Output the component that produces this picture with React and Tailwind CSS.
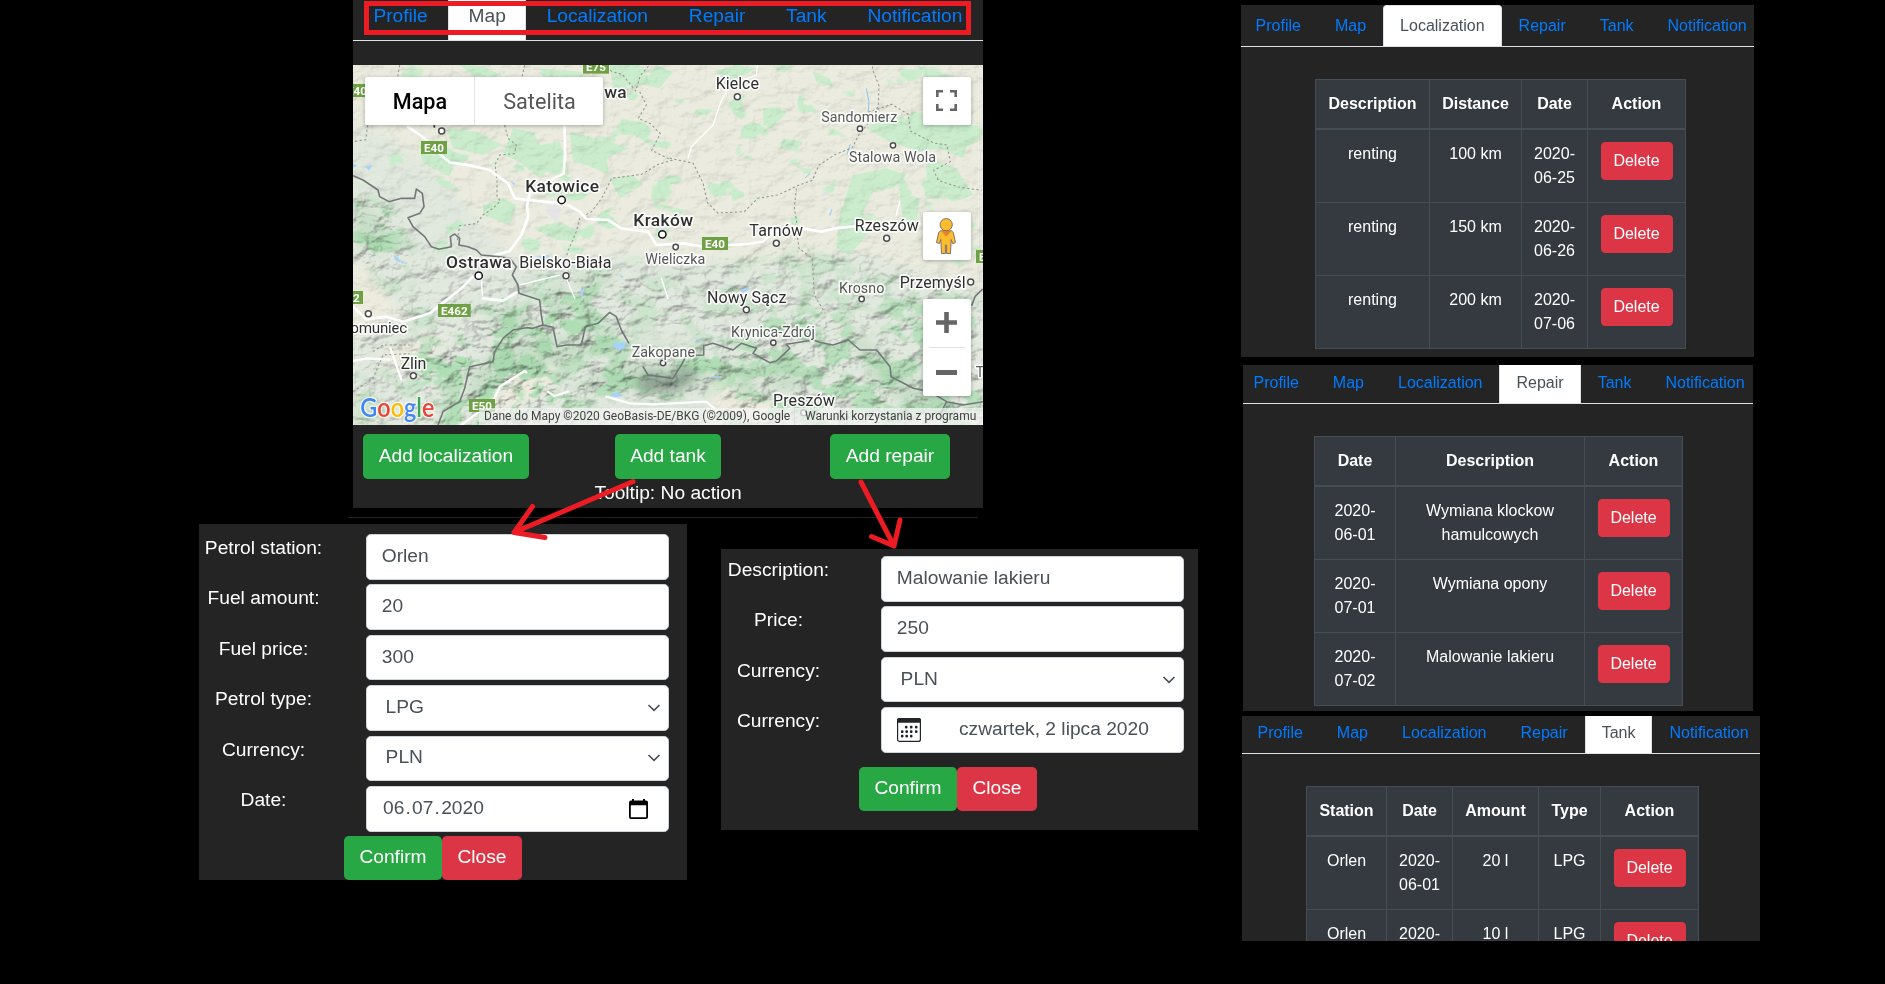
import React from "react";

const TABS = ["Profile", "Map", "Localization", "Repair", "Tank", "Notification"];

/* ---------- tabs ---------- */

function Tabs({ active }) {
  return (
    <nav className="flex w-[600px] flex-none text-base leading-6">
      {TABS.map((t) => (
        <span
          key={t}
          className={
            t === active
              ? "h-[42px] flex-none rounded-t border border-[#dee2e6] border-b-white bg-white px-4 py-2 text-[#495057]"
              : "h-[42px] flex-none border border-transparent border-b-[#dee2e6] px-4 py-2 text-[#007bff]"
          }
        >
          {t}
        </span>
      ))}
    </nav>
  );
}

function LargeTabs({ active }) {
  return (
    <nav className="-mt-[10px] flex h-[51px] w-[700px] flex-none text-[19.2px] leading-[28.8px]">
      {TABS.map((t) => (
        <span
          key={t}
          className={
            t === active
              ? "flex-none border border-[#dee2e6] border-b-white bg-white px-[19.4px] pt-[10.5px] text-[#495057]"
              : "flex-none border border-transparent border-b-[#dee2e6] px-[19.4px] pt-[10.5px] text-[#007bff]"
          }
        >
          {t}
        </span>
      ))}
    </nav>
  );
}

/* ---------- tables ---------- */

function DeleteButton() {
  return (
    <button className="block h-[38px] w-[72px] rounded border border-[#dc3545] bg-[#dc3545] text-center text-white">
      Delete
    </button>
  );
}

function DataTable({ cols, head, rows }) {
  return (
    <div className="bg-[#454d55] p-px text-base leading-6 text-white">
      <div className={"mb-[2px] grid gap-x-px " + cols}>
        {head.map((h) => (
          <div key={h} className="h-12 bg-[#343a40] py-3 text-center font-bold">
            {h}
          </div>
        ))}
      </div>
      <div className={"grid gap-px " + cols}>
        {rows.flatMap((r, i) => [
          ...r.map((c, j) => (
            <div key={i + "-" + j} className="h-[72px] whitespace-pre-line bg-[#343a40] py-3 text-center">
              {c}
            </div>
          )),
          <div key={i + "-action"} className="flex h-[72px] justify-center bg-[#343a40] py-3">
            <DeleteButton />
          </div>,
        ])}
      </div>
    </div>
  );
}

/* ---------- forms ---------- */

function Chevron() {
  return (
    <svg className="mr-[7px] h-[8px] w-[14px]" viewBox="0 0 14 8" fill="none" stroke="#495057" strokeWidth="1.700">
      <path d="M1.500 1 L7 6.300 L12.500 1" />
    </svg>
  );
}

function DateIcon() {
  return (
    <svg className="mr-[20px] h-[20px] w-[19px]" viewBox="0 0 19 20">
      <path
        fill="#000"
        fillRule="evenodd"
        d="M3 0h2v1.500h9V0h2v1.500h1a2 2 0 0 1 2 2V18a2 2 0 0 1-2 2H2a2 2 0 0 1-2-2V3.500a2 2 0 0 1 2-2h1zM1.800 6.300V18.300h15.400V6.300z"
      />
    </svg>
  );
}

function PickerIcon() {
  const dots = [
    [9, 9], [14, 9], [19, 9],
    [5, 13.500], [9.500, 13.500], [14, 13.500], [19, 13.500],
    [5, 18], [9.500, 18], [14, 18],
  ];
  return (
    <svg className="ml-[15px] mt-[1px] h-6 w-6" viewBox="0 0 24 24">
      <rect x="0.6" y="0.6" width="22.800" height="22.800" rx="2" fill="#fff" stroke="#212529" strokeWidth="1.2" />
      <path d="M0 4.800V2a2 2 0 0 1 2-2h20a2 2 0 0 1 2 2v2.800z" fill="#212529" />
      {dots.map(([x, y]) => (
        <rect key={x + "," + y} x={x - 1.1} y={y - 1.2} width="2.600" height="2.600" rx="1" fill="#212529" />
      ))}
    </svg>
  );
}

function Row({ label, children, labelWidth }) {
  return (
    <div className="flex h-[50.4px] flex-none">
      <div className={"flex-none text-center leading-[28.8px] text-white " + labelWidth}>{label}</div>
      <div className="ml-auto flex h-[45.6px] w-[303px] flex-none items-center rounded-[4.8px] border border-[#ced4da] bg-white text-[#495057]">
        {children}
      </div>
    </div>
  );
}

function TextValue({ children }) {
  return <span className="-mt-px pl-[14.8px]">{children}</span>;
}

function SelectValue({ children }) {
  return (
    <>
      <span className="-mt-px flex-1 pl-[18.6px]">{children}</span>
      <Chevron />
    </>
  );
}

function FormButtons({ className }) {
  return (
    <div className={"flex text-white " + className}>
      <button className="h-[44.500px] w-[98px] rounded-[4.8px] bg-[#28a745] pb-px">Confirm</button>
      <button className="h-[44.500px] w-[80px] rounded-[4.8px] bg-[#dc3545] pb-px">Close</button>
    </div>
  );
}

/* ---------- map ---------- */

const CITIES = [
  { n: "Katowice", x: 517, y: 380, w: 221, s: 52, b: 1, c: [626, 405, 11] },
  { n: "Kraków", x: 841, y: 482, w: 179, s: 52, b: 1, c: [928, 508, 11] },
  { n: "Ostrawa", x: 279, y: 608, w: 197, s: 52, b: 1, c: [377, 632, 11] },
  { n: "Kielce", x: 1088, y: 73, w: 130, s: 48, c: [1153, 95, 9] },
  { n: "Tarnów", x: 1189, y: 514, w: 161, s: 48, c: [1270, 535, 9] },
  { n: "Rzeszów", x: 1505, y: 498, w: 192, s: 48, c: [1601, 520, 9] },
  { n: "Bielsko-Biała", x: 499, y: 609, w: 276, s: 48, c: [639, 632, 9] },
  { n: "Nowy Sącz", x: 1062, y: 714, w: 238, s: 48, c: [1180, 734, 9] },
  { n: "Przemyśl", x: 1640, y: 669, w: 198, s: 48, c: [1853, 651, 9] },
  { n: "Preszów", x: 1260, y: 1022, w: 185, s: 48, c: [1352, 1043, 9] },
  { n: "Zlin", x: 143, y: 911, w: 77, s: 48, c: [181, 932, 9] },
  { n: "omuniec", x: -8, y: 803, w: 171, s: 46, c: [46, 746, 9] },
  { n: "Sandomierz", x: 1405, y: 172, w: 228, s: 43, l: 1, c: [1521, 191, 8] },
  { n: "Stalowa Wola", x: 1488, y: 291, w: 261, s: 43, l: 1, c: [1620, 241, 8] },
  { n: "Wieliczka", x: 877, y: 597, w: 180, s: 43, l: 1, c: [968, 546, 8] },
  { n: "Krosno", x: 1458, y: 683, w: 136, s: 43, l: 1, c: [1526, 702, 8] },
  { n: "Krynica-Zdrój", x: 1134, y: 815, w: 252, s: 43, l: 1, c: [1261, 833, 8] },
  { n: "Zakopane", x: 836, y: 876, w: 190, s: 43, l: 1, c: [930, 894, 8] },
];

const SHIELDS = [
  ["E40", 204, 228, 78], ["E75", 690, -13, 78], ["E40", 1047, 516, 78],
  ["E462", 255, 717, 98], ["E50", 348, 1002, 78],
];

function Terrain() {
  return (
    <svg className="block h-[360px] w-[630px]" viewBox="0 0 1890 1080">
      <defs>
        <filter id="relief" x="0" y="0" width="100%" height="100%" colorInterpolationFilters="sRGB">
          <feTurbulence type="fractalNoise" baseFrequency="0.017 0.024" numOctaves="4" seed="11" />
          <feColorMatrix values="0 0 0 0 0  0 0 0 0 0  0 0 0 0 0  1 0 0 0 0" />
          <feDiffuseLighting surfaceScale="11" diffuseConstant="1.120" lightingColor="#fff">
            <feDistantLight azimuth="225" elevation="63" />
          </feDiffuseLighting>
        </filter>
        <filter id="woods" x="0" y="0" width="100%" height="100%" colorInterpolationFilters="sRGB">
          <feTurbulence type="fractalNoise" baseFrequency="0.012 0.016" numOctaves="4" seed="4" />
          <feColorMatrix values="0 0 0 0 0.69  0 0 0 0 0.87  0 0 0 0 0.71  0 9 0 0 -4.2" />
        </filter>
        <filter id="groves" x="0" y="0" width="100%" height="100%" colorInterpolationFilters="sRGB">
          <feTurbulence type="fractalNoise" baseFrequency="0.009 0.012" numOctaves="3" seed="23" />
          <feColorMatrix values="0 0 0 0 0.79  0 0 0 0 0.93  0 0 0 0 0.8  0 18 0 0 -11.6" />
        </filter>
        <filter id="soft" x="-20%" y="-20%" width="140%" height="140%">
          <feGaussianBlur stdDeviation="16" />
        </filter>
        <mask id="hills">
          <rect width="1890" height="1080" fill="#333" />
          <g filter="url(#soft)">
            <path fill="#999" d="M0 380L120 420 230 560 390 620 480 660 620 600 820 600 1100 590 1350 540 1600 580 1890 700V1100H0V800L150 740 40 620 0 580z" />
            <path fill="#eee" d="M0 400L90 430 140 500 110 570 60 600 0 560z" />
            <path fill="#fff" d="M380 760L480 710 560 750 570 660 640 640 780 620 790 660 700 700 680 760 780 740 830 840 620 890 560 940 620 940 540 1080 250 1080 330 960 200 950 200 850 370 830z" />
            <path fill="#fff" d="M560 980L650 930 820 880 900 900 1040 880 1150 850 1100 930 1030 970 950 990 830 970 700 1000 600 1030z" />
            <path fill="#bbb" d="M750 680L900 620 1060 700 1000 800 850 770z" />
            <path fill="#ccc" d="M1150 850L1280 740 1440 740 1540 860 1700 860 1890 960V1080H1120V950z" />
            <path fill="#bbb" d="M1580 700L1800 720 1890 760V960L1640 900z" />
            <path fill="#222" d="M830 800L950 780 1050 820 1010 850 850 850z" />
            <path fill="#222" d="M750 990L1000 1000 1100 950 1150 1040 900 1080 700 1060z" />
          </g>
        </mask>
        <mask id="forest">
          <g filter="url(#soft)">
            <path fill="#666" d="M0 380L120 420 200 560 160 640 250 720 380 720 480 660 620 600 820 640 1100 620 1350 540 1600 620 1890 700V1100H0V940L150 900 180 770 40 620 0 580z" />
            <path fill="#fff" d="M0 400L90 430 140 500 110 570 60 600 0 560z" />
            <path fill="#fff" d="M380 760L480 710 560 750 570 660 640 640 780 620 790 660 700 700 680 760 780 740 830 840 620 890 560 940 620 940 540 1080 250 1080 330 960 200 950 200 850 370 830z" />
            <path fill="#fff" d="M560 980L650 930 820 880 900 900 1040 880 1150 850 1100 930 1030 970 950 990 830 970 700 1000 600 1030z" />
            <path fill="#ddd" d="M1150 850L1280 740 1440 740 1540 860 1700 860 1890 960V1080H1120V950z" />
            <path fill="#ccc" d="M1580 700L1800 720 1890 760V960L1640 900z" />
            <path fill="#000" d="M830 800L950 780 1050 820 1010 850 850 850z" />
            <path fill="#111" d="M750 990L1000 1000 1100 950 1150 1040 900 1080 700 1060z" />
          </g>
        </mask>
        <mask id="lowland">
          <path fill="#fff" filter="url(#soft)" d="M0 0H1890V660L1600 560 1200 570 700 580 460 560 200 560 100 430 0 360z" />
        </mask>
      </defs>

      <rect width="1890" height="1080" fill="#ebecdf" />
      <g filter="url(#soft)">
        <path fill="#e1e8de" d="M0 170L170 250 300 380 480 580 800 570 1200 590 1500 560 1890 680V1080H0V820L160 760 30 600 0 580z" />
        <path fill="#eeecdf" d="M0 590L60 640 110 730 30 760 0 740zM60 870L300 800 240 860 130 900z" />
        <path fill="#eeecdf" d="M500 920L620 900 560 990 380 1060zM1100 950L1230 1000 1300 1080H1060z" />
      </g>
      <g mask="url(#lowland)">
        <rect width="1890" height="1080" filter="url(#groves)" />
      </g>

      <g fill="#cbedcd">
        <path d="M320 0l70 4 60 30-80 6z M560 10l120 10 20 20-130-4z M770 0h90l-40 60 20 50-60-40z M280 190l90 10 80 40-60 30-90-20z" />
        <path d="M480 190l60 10 20 40 60-10 15 40 15 60-60-20-30 30-60-50-50-20z M650 200l120 30 60 20-70 30 10 50-70-30-40-10z" />
        <path d="M200 265l70 10 30 30-10 30-80-40z M390 420l60-20 40 20-20 60-80-30z M540 490l80-20 60 30-10 30-60-6z M770 340l70-10 30 30-70 40z" />
        <path d="M1230 130l50-5 15 25-40 40-25-10z M1290 220l60 10-20 30-50-10z M1600 150l60 10 20-20 80 10 90 70-20 60-70-30-60 10-90-30-70-40z" />
        <path d="M1500 330l100-20 60 20-40 40-60 10-30 60 20 60-60 70-40-20 10-100z M1720 280l90 30 50 80-60 20-80-50z M1640 380l60 20-10 90-40-20z" />
        <path d="M1690 0l100 30 60 20-30 30-90-30z M1080 20l70-20 60 10-70 40z M1380 20l50 20 10 25-50-15z M870 60l40-60 50 20-40 50z" />
      </g>

      <g mask="url(#forest)">
        <rect width="1890" height="1080" filter="url(#woods)" />
      </g>
      <g fill="#a3d0a8" opacity=".4" filter="url(#soft)">
        <path d="M0 420l70 20 40 60-20 60-90-20z M400 760l80-50 50 40 20 60-120-20z M575 670l60-20 20 110-60 10z M660 630l120-10-10 40-90 10z" />
        <path d="M350 930l90-90 120-30 140 10 70-60 40 50-140 90-130 10-120 60-80 60z M620 980l200-90 240 20 80-50-40 70-90 40-200-10z" />
        <path d="M1130 930l60-20 30 70-70 40z M1240 890l100 20 10 60-90 10z M1480 780l100 80 120 90 100 50-60 60-180-100z" />
      </g>
      <g mask="url(#hills)" className="mix-blend-multiply">
        <rect width="1890" height="1080" filter="url(#relief)" />
      </g>
      <path filter="url(#soft)" fill="#4e5f55" opacity=".5" d="M850 950l40-30 60 20 60-40 20 40-60 40-110 0z" />

      <g fill="#a6d3fb">
        <path d="M35 305l25-5-12 16z M0 296l14 6-14 6z M120 570l16 8 6 14-14-6z M138 585l18 6-6 6z M470 345l18 12-6 3z M550 575l36-6 2 12-30 6z" />
        <path d="M682 678l12-8-6 22-6 2z M784 828l14 8 16-8 4 20-18 8-18-10z M775 985l24-2 10 10-28 4z M1165 676l24-12-6 14-20 8z M1020 816l32 14-10 2z M1074 934h32l-4 4h-26z M1428 450l8-20 2 4-6 20z M800 626l12 10-8 2z" />
      </g>
      <g fill="none" stroke="#8fc3f2" strokeWidth="3">
        <path d="M1540 70l8 40-2 30M1492 238l-10 30M1372 325l-16 14" />
      </g>

      <g fill="none" stroke="#96988f" strokeWidth="3.200" strokeDasharray="7 7">
        <path d="M140 0l-6 36M44 180l-6 44-38 6M455 180l10 40 25 20-6 26-44 4-14 30 6 44 0 50 10 14-22 22-30 20-20 26-50 6-8 50" />
        <path d="M515 0l-8 36M748 0l30 20 30 8 40 50 14-46 34-40M860 80l20 40-24 40 36 16 30 30-26 50 60 30-40 12-50 30-90 12-30 60-30 40-36 20-10 40-26 60-12 50" />
        <path d="M950 280l70 14 30 60 14 60 30 30 80-4 40-40 60-10 60-28 44-16 20-46 50-32 50-20 20-40 34-40 24-46 2-60-20-50 4-30" />
        <path d="M1330 370l-6 60 10 60M1330 490l8 60 40 30 6 110 30 50M1546 142l70-24 50 30 6 50 70 36 40 6 10 50-50 26 14 30 60 20 70 10" />
        <path d="M0 980l60-40 30-70 80-4M60 860l30-20 80 0" />
      </g>

      <g fill="none" stroke="#fff" strokeLinejoin="round" strokeLinecap="round">
        <path strokeWidth="8" d="M165 185L215 220 245 255 290 292 355 302 410 315 465 355 485 400 525 405 600 413 645 420 680 440 700 462 765 465 805 490 885 500 910 540 990 535 1050 545 1180 537 1230 530 1260 500 1350 490 1405 500 1445 490 1510 483 1700 475" />
        <path strokeWidth="8" d="M635 185L636 270 632 325 575 355 530 385 522 425 526 455 505 510 470 558 410 575" />
        <path strokeWidth="8" d="M360 635L325 670 230 745 150 770 100 755 40 763 0 725M490 683L450 707 390 700" />
        <path strokeWidth="7" d="M112 850L145 943M0 888L40 880 112 884M325 1080L420 1010 440 965 515 918 520 922M585 980L605 993 645 980M760 995L830 1015 900 1018 1060 1010 1095 1040" />
        <path strokeWidth="4" d="M1213 0L1210 30 1130 60 1102 115 1080 180 1015 245 1005 280M640 640L665 700M690 0L715 28M925 640L945 700M385 640L388 690M500 660L620 630M1640 410L1630 450" />
      </g>
      <g fill="#e4e3ea" opacity=".75">
        <path d="M580 420l36 0 6 30-14 20-24-24z M650 345l40 0 14 16-40 10z M365 640l20 0-2 16-18 4z M910 480l30-6 14 16-30 10z M1410 380l20 4-6 12-16-6z" />
      </g>

      <g fill="none" stroke="#74777a" strokeWidth="4.800" strokeLinejoin="round">
        <path d="M0 332L30 345 75 375 80 395 108 410 145 400 185 400 190 372 208 385 213 425 200 445 165 458 180 485 215 515 235 545 258 553 295 545 292 515 305 507 320 520 318 540 345 545 370 555 385 570 435 575 470 580 490 605 478 630 495 660 498 685 530 695 560 705 565 750 570 780 600 787 612 845 640 840 685 840 697 785 735 775 770 742 790 755 805 795 828 835" />
        <path d="M570 780L540 790 520 788 480 795 450 820 425 860 420 890 350 905 335 970 320 1010 270 1040 255 1080M870 905L885 930 960 940 985 900 1000 872 1052 870 1052 842 1080 835 1140 855 1165 835 1210 850 1200 865 1250 893 1270 888 1290 870 1310 850 1300 838 1330 833 1381 825 1400 832 1440 840 1486 825 1521 855 1571 855 1611 905 1614 935 1681 970 1730 980 1781 1010 1830 1020 1890 1010M1781 1010L1760 1050M1889 672L1866 695 1856 722" />
      </g>

      {SHIELDS.map(([t, x, y, w]) => (
        <g key={t + x}>
          <rect x={x} y={y} width={w} height="39" fill="#6ea144" />
          <text x={x + w / 2} y={y + 32} textAnchor="middle" className="font-['Roboto',sans-serif] font-bold" fontSize="35" fill="#fff">
            {t}
          </text>
        </g>
      ))}
      <rect x="0" y="57" width="60" height="39" fill="#6ea144" />
      <text x="-18" y="89" className="font-['Roboto',sans-serif] font-bold" fontSize="35" fill="#fff">E40</text>
      <rect x="0" y="678" width="30" height="39" fill="#6ea144" />
      <text x="0" y="710" className="font-['Roboto',sans-serif] font-bold" fontSize="35" fill="#fff">2</text>
      <rect x="1869" y="555" width="30" height="39" fill="#6ea144" />
      <text x="1878" y="587" className="font-['Roboto',sans-serif] font-bold" fontSize="35" fill="#fff">E</text>

      <g className="font-['Roboto',sans-serif]" strokeLinejoin="round">
        {CITIES.map((c) => (
          <g key={c.n}>
            <circle cx={c.c[0]} cy={c.c[1]} r={c.c[2] + 3} fill="#fff" fillOpacity=".8" />
            <circle cx={c.c[0]} cy={c.c[1]} r={c.c[2]} fill="#fff" stroke={c.b ? "#111" : "#4a4a4a"} strokeWidth="4.500" />
            <text
              x={c.x}
              y={c.y}
              fontSize={c.s}
              textLength={c.w}
              fontWeight={c.b ? 500 : 400}
              fill={c.l ? "#565656" : "#2f2f2f"}
              stroke="#fff"
              strokeOpacity=".85"
              strokeWidth="10"
              style={{ paintOrder: "stroke" }}
            >
              {c.n}
            </text>
          </g>
        ))}
        <circle cx="266" cy="198" r="9" fill="#fff" stroke="#4a4a4a" strokeWidth="4.500" />
        <path d="M244 178v10" stroke="#333" strokeWidth="5" />
        <text x="754" y="100" fontSize="52" fontWeight="500" fill="#333" stroke="#fff" strokeWidth="9" style={{ paintOrder: "stroke" }}>wa</text>
        <text x="1868" y="936" fontSize="43" fill="#5b5b5b" stroke="#fff" strokeWidth="9" style={{ paintOrder: "stroke" }}>T</text>
      </g>

      <text
        x="22"
        y="1055"
        fontSize="81"
        textLength="222"
        lengthAdjust="spacingAndGlyphs"
        className="font-['Lato',sans-serif] font-semibold"
        style={{ paintOrder: "stroke" }}
        stroke="#fff"
        strokeWidth="8"
        strokeOpacity=".75"
      >
        <tspan fill="#4285f4">G</tspan>
        <tspan fill="#ea4335">o</tspan>
        <tspan fill="#fbbc05">o</tspan>
        <tspan fill="#4285f4">g</tspan>
        <tspan fill="#34a853">l</tspan>
        <tspan fill="#ea4335">e</tspan>
      </text>
    </svg>
  );
}

function MapView() {
  return (
    <div className="relative mt-[24px] h-[360px] w-[630px] overflow-hidden font-['Roboto',sans-serif]">
      <Terrain />
      <div className="absolute left-3 top-3 flex h-12 overflow-hidden rounded-[2px] bg-white text-[21.6px] leading-[49.500px] shadow-[0_1px_4px_rgba(0,0,0,0.3)]">
        <span className="w-[110px] border-r border-[#e6e6e6] pl-px text-center font-medium text-black">Mapa</span>
        <span className="w-[128px] pl-px text-center text-[#565656]">Satelita</span>
      </div>
      <div className="absolute right-3 top-3 flex h-12 w-12 items-center justify-center rounded-[2px] bg-white pr-px shadow-[0_1px_4px_rgba(0,0,0,0.3)]">
        <svg className="-mt-px h-[21px] w-[21px]" viewBox="0 0 21 21" fill="none" stroke="#666" strokeWidth="2.600">
          <path d="M1.300 7V1.300H7M14 1.300h5.700V7M19.700 14v5.700H14M7 19.700H1.300V14" />
        </svg>
      </div>
      <div className="absolute right-3 top-[147px] flex h-12 w-12 items-center justify-center rounded-[2px] bg-white pr-[2px] shadow-[0_1px_4px_rgba(0,0,0,0.3)]">
        <svg className="h-9 w-5" viewBox="0 0 20 36" stroke="#80706a" strokeWidth="1" strokeLinejoin="round">
          <path d="M4.500 12.800h11l1.800 1.700 2.200 10-2.800 1.200-1.500-4.200-.7 14H10.600V27H9.400v8.500H5.500l-.7-14-1.500 4.200L.5 24.500l2.200-10z" fill="#fbbc2d" />
          <path d="M5 12.800h10.500L10.300 18.500z" fill="#e5822d" stroke="none" />
          <circle cx="10.200" cy="6.700" r="6.100" fill="#fbbc2d" />
        </svg>
      </div>
      <div className="absolute right-3 top-[234px] flex h-[97px] w-12 flex-col items-center rounded-[2px] bg-white pr-px shadow-[0_1px_4px_rgba(0,0,0,0.3)]">
        <svg className="mt-[13px] h-[21px] w-[21px]" viewBox="0 0 21 21" fill="#666">
          <path d="M8.200 0h4.600v8.200H21v4.600h-8.200V21H8.200v-8.200H0V8.200h8.200z" />
        </svg>
        <span className="mt-[14px] h-px w-9 bg-[#e0e0e0]" />
        <svg className="mt-[22px] h-[5px] w-[21px]" viewBox="0 0 21 5" fill="#666">
          <path d="M0 0h21v5H0z" />
        </svg>
      </div>
      <div className="absolute bottom-0 right-0 flex h-[17px] w-[504px] bg-[#f5f5f5]/70 text-[12px] leading-[17px] text-[#444]">
        <span className="w-[312px] whitespace-nowrap pl-[5px]">Dane do Mapy ©2020 GeoBasis-DE/BKG (©2009), Google</span>
        <span className="ml-[3px] whitespace-nowrap border-l border-[#ddd] pl-[10px]">Warunki korzystania z programu</span>
      </div>
    </div>
  );
}

function Arrows() {
  return (
    <svg
      className="pointer-events-none absolute left-0 top-0 h-[984px] w-[1240px]"
      viewBox="0 0 1240 984"
      fill="none"
      stroke="#ed1c24"
      strokeWidth="5"
      strokeLinecap="round"
      strokeLinejoin="round"
    >
      <path d="M633 481.500L514 532.500M532.500 506.500L514 532.500L545 537.500" />
      <path d="M861 482L894 546M871.500 536.500L894 546L900 520" />
    </svg>
  );
}

export default function App() {
  return (
    <div className="relative flex h-[984px] w-[1885px] overflow-hidden bg-black font-['Liberation_Sans',Arial,sans-serif]">
      <div className="w-[1241px] flex-none text-[19.2px]">
        <section className="ml-[353px] h-[508px] w-[630px] overflow-hidden bg-[#242424]">
          <div className="relative border-[#dee2e6]">
            <div className="flex h-[41px] overflow-hidden border-b border-[#dee2e6]">
              <LargeTabs active="Map" />
            </div>
            <div className="absolute left-[11px] top-[1px] h-[34px] w-[607px] border-[5px] border-[#ed1c24]" />
          </div>
          <MapView />
          <div className="mt-[9px] flex pl-[10px] text-white">
            <button className="h-[45px] w-[166px] rounded-[4.8px] bg-[#28a745]">Add localization</button>
            <button className="ml-[86px] h-[45px] w-[106px] rounded-[4.8px] bg-[#28a745]">Add tank</button>
            <button className="ml-[109px] h-[45px] w-[120px] rounded-[4.8px] bg-[#28a745]">Add repair</button>
          </div>
          <p className="text-center leading-[28.8px] text-white">Tooltip: No action</p>
        </section>
        <div className="ml-[348px] mt-[9px] h-px w-[630px] bg-[#242424]" />
        <div className="flex items-start">
          <section className="ml-[199px] mt-[6px] flex h-[356px] w-[488px] flex-none flex-col bg-[#242424] pr-[18px] pt-[10px]">
            <Row label="Petrol station:" labelWidth="w-[129px]"><TextValue>Orlen</TextValue></Row>
            <Row label="Fuel amount:" labelWidth="w-[129px]"><TextValue>20</TextValue></Row>
            <Row label="Fuel price:" labelWidth="w-[129px]"><TextValue>300</TextValue></Row>
            <Row label="Petrol type:" labelWidth="w-[129px]"><SelectValue>LPG</SelectValue></Row>
            <Row label="Currency:" labelWidth="w-[129px]"><SelectValue>PLN</SelectValue></Row>
            <Row label="Date:" labelWidth="w-[129px]">
              <span className="-mt-px flex flex-1 gap-x-[1.2px] pl-[16px]">
                <span>06</span><span>.</span><span>07</span><span>.</span><span>2020</span>
              </span>
              <DateIcon />
            </Row>
            <FormButtons className="-mt-[0.4px] ml-[145px]" />
          </section>
          <section className="ml-[34px] mt-[31px] flex h-[281px] w-[477px] flex-none flex-col bg-[#242424] pr-[14px] pt-[7px]">
            <Row label="Description:" labelWidth="w-[115px]"><TextValue>Malowanie lakieru</TextValue></Row>
            <Row label="Price:" labelWidth="w-[115px]"><TextValue>250</TextValue></Row>
            <Row label="Currency:" labelWidth="w-[115px]"><SelectValue>PLN</SelectValue></Row>
            <Row label="Currency:" labelWidth="w-[115px]">
              <PickerIcon />
              <span className="-mt-px pl-[38px]">czwartek, 2 lipca 2020</span>
            </Row>
            <FormButtons className="mt-[9.400px] ml-[138px]" />
          </section>
        </div>
      </div>

      <div className="flex flex-none flex-col pt-[5px]">
        <section className="h-[352px] w-[513px] overflow-hidden bg-[#242424]">
          <div className="flex h-[42px] overflow-hidden border-b border-[#dee2e6]">
            <div className="-ml-[2.400px]"><Tabs active="Localization" /></div>
          </div>
          <div className="ml-[74px] mt-[32px] w-[371px]">
            <DataTable
              cols="grid-cols-[113px_91px_65px_1fr]"
              head={["Description", "Distance", "Date", "Action"]}
              rows={[
                ["renting", "100 km", "2020-\n06-25"],
                ["renting", "150 km", "2020-\n06-26"],
                ["renting", "200 km", "2020-\n07-06"],
              ]}
            />
          </div>
        </section>
        <section className="ml-[2px] mt-[8px] h-[346px] w-[510px] overflow-hidden bg-[#242424]">
          <div className="flex h-[39px] overflow-hidden border-b border-[#dee2e6]">
            <div className="-ml-[6.500px] -mt-[3px]"><Tabs active="Repair" /></div>
          </div>
          <div className="ml-[71px] mt-[32px] w-[369px]">
            <DataTable
              cols="grid-cols-[80px_188px_1fr]"
              head={["Date", "Description", "Action"]}
              rows={[
                ["2020-\n06-01", "Wymiana klockow\nhamulcowych"],
                ["2020-\n07-01", "Wymiana opony"],
                ["2020-\n07-02", "Malowanie lakieru"],
              ]}
            />
          </div>
        </section>
        <section className="ml-[1px] mt-[5px] h-[225px] w-[518px] overflow-hidden bg-[#242424]">
          <div className="flex h-[38px] overflow-hidden border-b border-[#dee2e6]">
            <div className="-ml-[1.500px] -mt-[4px]"><Tabs active="Tank" /></div>
          </div>
          <div className="ml-[64px] mt-[32px] w-[393px]">
            <DataTable
              cols="grid-cols-[79px_65px_85px_61px_1fr]"
              head={["Station", "Date", "Amount", "Type", "Action"]}
              rows={[
                ["Orlen", "2020-\n06-01", "20 l", "LPG"],
                ["Orlen", "2020-\n07-01", "10 l", "LPG"],
              ]}
            />
          </div>
        </section>
      </div>
      <Arrows />
    </div>
  );
}
